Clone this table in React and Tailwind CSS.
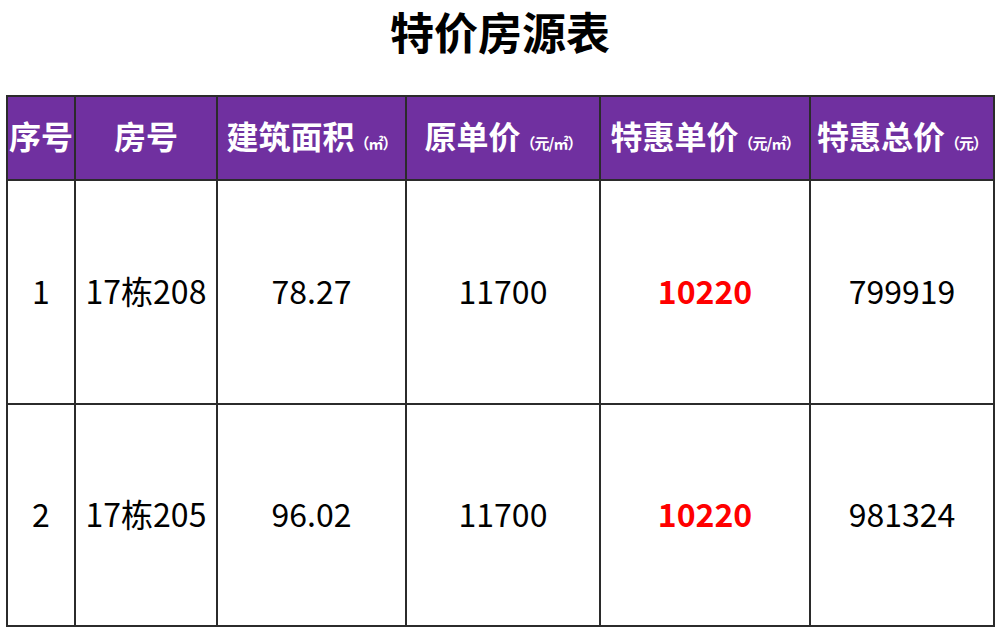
const cols = [
  { label: "序号", unit: "", w: "w-[68px]" },
  { label: "房号", unit: "", w: "w-[142px]" },
  { label: "建筑面积", unit: "（㎡）", w: "w-[189px]" },
  { label: "原单价", unit: "（元/㎡）", w: "w-[194px]" },
  { label: "特惠单价", unit: "（元/㎡）", w: "w-[210px]" },
  { label: "特惠总价", unit: "（元）", w: "w-[184px]" },
];

const rows = [
  { no: "1", room: "17栋208", area: "78.27", price: "11700", special: "10220", total: "799919", h: "h-[224px]" },
  { no: "2", room: "17栋205", area: "96.02", price: "11700", special: "10220", total: "981324", h: "h-[222px]" },
];

const cell = "border-2 border-[#2b2b2b] text-center align-middle px-0 pt-0 pb-[4px]";

export default function App() {
  return (
    <div className="w-[1000px] h-[632px] bg-white font-['Noto_Sans_CJK_SC','Noto_Sans',sans-serif]">
      {/* 标题 */}
      <div className="h-[95px] pt-[2px] text-center">
        <h1 className="inline-block px-2 text-[44px] leading-[58px] font-bold text-black">特价房源表</h1>
      </div>

      <table className="ml-[6px] w-[987px] table-fixed border-collapse">
        <thead>
          <tr className="h-[84px] bg-[#7030a0]">
            {cols.map((c) => (
              <th key={c.label} className={`${cell} ${c.w} text-white font-bold whitespace-nowrap`}>
                <span className="text-[32px] leading-none">{c.label}</span>
                {c.unit && <span className="text-[15px] leading-none font-bold tracking-[-1px]">{c.unit}</span>}
              </th>
            ))}
          </tr>
        </thead>
        <tbody>
          {rows.map((r) => (
            <tr key={r.no} className={`${r.h} text-[32px] text-black`}>
              <td className={cell}>{r.no}</td>
              <td className={`${cell} whitespace-nowrap`}>{r.room}</td>
              <td className={cell}>{r.area}</td>
              <td className={cell}>{r.price}</td>
              <td className={`${cell} text-[#ff0000] font-bold`}>{r.special}</td>
              <td className={cell}>{r.total}</td>
            </tr>
          ))}
        </tbody>
      </table>
    </div>
  );
}
